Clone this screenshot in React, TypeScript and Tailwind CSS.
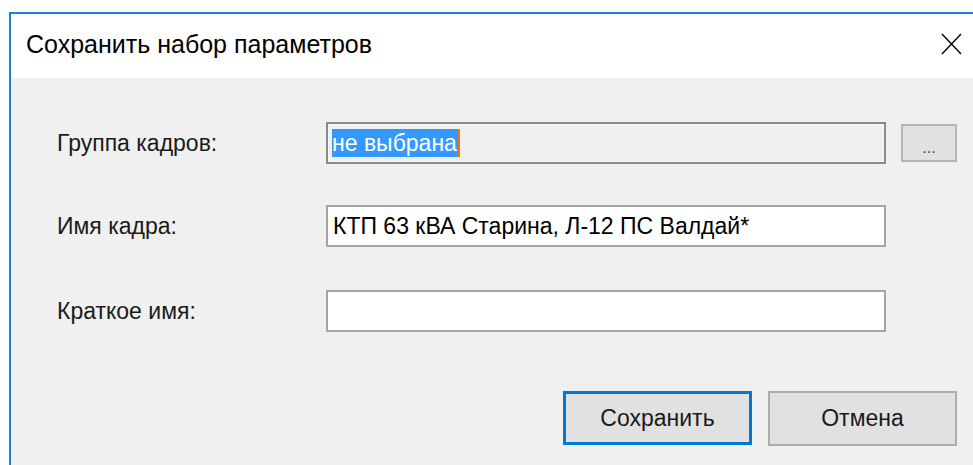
import React from "react";

const font = { fontFamily: '"Liberation Sans", Arial, sans-serif' };

function Field({ label, children }: { label: string; children: React.ReactNode }) {
  return (
    <div className="flex items-center">
      <div className="w-[269px] text-[23px] text-[#1a1a1a] leading-none">{label}</div>
      {children}
    </div>
  );
}

function WinButton({ children, primary }: { children: React.ReactNode; primary?: boolean }) {
  return (
    <button
      className={
        primary
          ? "w-[189px] h-[54px] bg-[#e1e1e1] border-[3px] border-[#0078d7] text-[23px] text-[#1a1a1a]"
          : "w-[189px] h-[55px] bg-[#e1e1e1] border-2 border-[#adadad] text-[23px] text-[#1a1a1a]"
      }
    >
      {children}
    </button>
  );
}

export default function App() {
  return (
    <div className="w-[973px] h-[465px] bg-white pl-[9px] pt-[12px] overflow-hidden" style={font}>
      <div className="h-full flex flex-col border-l-2 border-t-2 border-[#1883d7]">
        {/* title bar */}
        <div className="h-[64px] bg-white flex items-center justify-between pl-[15px] pr-[11px]">
          <span className="text-[25px] text-black leading-none -mt-[3px]">Сохранить набор параметров</span>
          <svg width="21" height="22" viewBox="0 0 21 22" className="-mt-[5px]">
            <path d="M1 1 L20 21 M20 1 L1 21" stroke="#111" strokeWidth="1.6" />
          </svg>
        </div>

        {/* form body */}
        <div className="flex-1 bg-[#f0f0f0] pl-[46px] pr-[16px] pt-[44px] flex flex-col">
          <Field label="Группа кадров:">
            <div className="w-[560px] h-[42px] border-2 border-[#8a8a8a] bg-[#f0f0f0] flex items-center">
              <div className="h-full w-full border border-[#fbfbfb] flex items-center pl-[3px]">
                <span className="bg-[#3399ff] text-white text-[23px] leading-[28px] h-[28px] pr-[1px] border-r-2 border-[#e07a10]">
                  не выбрана
                </span>
              </div>
            </div>
            <button className="ml-[15px] w-[56px] h-[38px] bg-[#e1e1e1] border-2 border-[#b5b5b5] flex items-end justify-center pb-[4px] text-[16px] leading-none text-[#4a3a6a]">
              ...
            </button>
          </Field>

          <div className="mt-[41px]">
            <Field label="Имя кадра:">
              <div className="w-[560px] h-[42px] border-2 border-[#a5a5a5] bg-white flex items-center pl-[5px] text-[23px] text-black">
                КТП 63 кВА Старина, Л-12 ПС Валдай*
              </div>
            </Field>
          </div>

          <div className="mt-[43px]">
            <Field label="Краткое имя:">
              <div className="w-[560px] h-[42px] border-2 border-[#a5a5a5] bg-white" />
            </Field>
          </div>

          <div className="mt-[59px] flex justify-end gap-[16px]">
            <WinButton primary>Сохранить</WinButton>
            <WinButton>Отмена</WinButton>
          </div>
        </div>
      </div>
    </div>
  );
}
